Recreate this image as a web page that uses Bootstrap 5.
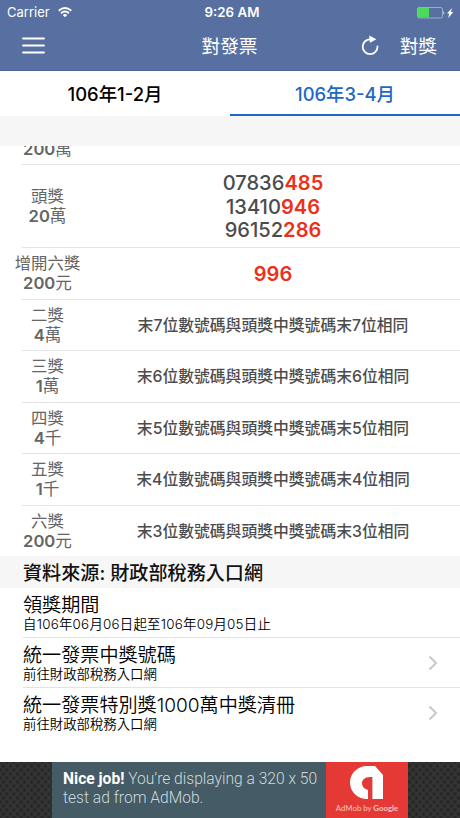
<!DOCTYPE html>
<html lang="zh-Hant">
<head>
<meta charset="utf-8">
<meta name="viewport" content="width=device-width, initial-scale=1">
<title>對發票</title>
<link href="https://cdn.jsdelivr.net/npm/bootstrap@5.3.0/dist/css/bootstrap.min.css" rel="stylesheet">
<style>
body{font-family:Inter,"Noto Sans CJK TC",sans-serif;height:818px;overflow:hidden;color:#111;background:#fff}
svg{display:block;flex:none}
.top-area{height:71px;background:#5770a1;border-bottom:1px solid #4b6494}
.status-line{height:24px;font-size:13px;padding:1px 3px 0 7px}
.status-line .clock{font-size:13.3px}
.status-line>div,.title-line>div{flex:1 1 0}
.title-line{height:46px;font-size:18.7px;padding:1px 23px 0 22px}
.period-tabs{height:45px}
.period-tabs .nav-link{border-radius:0;color:#000;font-size:18.4px;font-weight:500;padding:0;line-height:46px;height:45px}
.period-tabs .nav-link.active{background:#fff;color:#2168c4;border-bottom:2px solid #2168c4}
.band{background:#f6f6f6}
.prizes{height:410px;color:#4c4c4c}
.prize{margin-left:22px;border-bottom:1px solid #e3e3e3;height:51.5px;gap:13px;flex:none}
.prize:first-child{padding-bottom:5px}
.prize:last-child{border-bottom:0;height:50.5px}
.prize-name{width:51px;line-height:20px;font-size:16.4px;color:#656565;white-space:nowrap}
.prize-name b{font-weight:600;font-size:16.6px}
.prize-name i{font-style:normal;font-weight:400}
.rule{font-size:15.8px;font-weight:500;white-space:nowrap;padding-top:2px}
.digits{font-size:20.1px;line-height:23.7px;font-weight:500;padding-top:3px}
.hit{color:#ee2f19;font-weight:600}
.source{height:31.5px;font-size:19.1px;font-weight:500;padding:2px 0 0 23px;line-height:31px}
.info{margin-left:23px;height:50px;border-bottom:1px solid #e3e3e3;padding:5px 22px 0 0}
.info:last-child{border-color:transparent}
.info-title{font-size:19.1px;line-height:25px;color:#000;font-weight:350}
.info-sub{font-size:13.4px;line-height:13px;color:#000;font-weight:350}
.info-date{letter-spacing:.24px}
.chevron{margin-top:12px}
.ad{height:56px;background-color:#343434;background-image:radial-gradient(circle,#282828 1.6px,transparent 2.1px),radial-gradient(circle,#282828 1.6px,transparent 2.1px);background-size:7px 8px;background-position:0 0,3.5px 4px}
.ad-copy{width:274px;background:#455b65;color:#cddadf;font:300 15.6px/18.5px Roboto,sans-serif;padding:8px 0 0 11px;white-space:nowrap}
.ad-copy strong{color:#fff;font-weight:700}
.ad-brand{width:82px;background:#e53935;color:#fbc5c2;font:400 7.8px/9px Lato,sans-serif;padding-top:3px}
</style>
</head>
<body class="d-flex flex-column">
<header class="top-area text-white flex-shrink-0">
  <div class="status-line d-flex align-items-center">
    <div class="d-flex align-items-center gap-1"><span>Carrier</span>
      <svg class="ms-1" width="14" height="11" viewBox="0 0 14 11" fill="none" stroke="#fff" stroke-width="1.9"><path d="M.7 3.8Q7-1.6 13.3 3.8M3 6.3Q7 2.9 11 6.3"/><path d="M4.7 7.9Q7 6.2 9.3 7.9L7 10.3Z" fill="#fff" stroke="none"/></svg>
    </div>
    <span class="clock fw-semibold">9:26 AM</span>
    <div class="d-flex justify-content-end">
      <svg width="40" height="12" viewBox="0 0 40 12"><rect x=".5" y=".5" width="25" height="10.5" rx="1.5" fill="none" stroke="#9aabcb"/><path d="M1 1h11v9.5H1z" fill="#4cd95c"/><path d="M26.5 3.8q1.7 2 0 4z" fill="#fff"/><path d="M35 1l-5 5.5h2.2L31.3 11l5-6h-2.4z" fill="#fff"/></svg>
    </div>
  </div>
  <div class="title-line d-flex align-items-center">
    <div class="pb-1"><svg width="23" height="17" viewBox="0 0 23 17" stroke="#fff" stroke-width="1.8" stroke-linecap="round"><path d="M1 1.5h21M1 8.500h21M1 15.500h21"/></svg></div>
    <span>對發票</span>
    <div class="d-flex justify-content-end align-items-center">
      <svg class="mb-1" width="18" height="20" viewBox="0 0 18 20"><path d="M9.500 4.300A7.400 7.400 0 1 0 16.500 11.500" fill="none" stroke="#fff" stroke-width="1.800" stroke-linecap="round"/><path d="M8.200.4l7.200 3.900-6.500 3.500z" fill="#fff"/></svg>
      <span style="margin-left:21px">對獎</span>
    </div>
  </div>
</header>
<nav class="period-tabs nav nav-pills nav-fill flex-shrink-0">
  <a class="nav-link col-6 text-center" href="#">106年1-2月</a>
  <a class="nav-link active col-6 text-center" href="#">106年3-4月</a>
</nav>
<div class="band flex-shrink-0" style="height:30px"></div>
<section class="prizes d-flex flex-column justify-content-end overflow-hidden flex-shrink-0">
  <div class="prize d-flex align-items-end"><div class="prize-name text-center"><b>200<i>萬</i></b></div></div>
  <div class="prize d-flex align-items-center" style="height:83px"><div class="prize-name d-flex flex-column align-items-center"><span>頭獎</span><b>20<i>萬</i></b></div>
    <div class="digits flex-fill text-center"><div>07836<span class="hit">485</span></div><div>13410<span class="hit">946</span></div><div>96152<span class="hit">286</span></div></div></div>
  <div class="prize d-flex align-items-center"><div class="prize-name d-flex flex-column align-items-center"><span>增開六獎</span><b>200<i>元</i></b></div><div class="digits flex-fill text-center hit">996</div></div>
  <div class="prize d-flex align-items-center"><div class="prize-name d-flex flex-column align-items-center"><span>二獎</span><b>4<i>萬</i></b></div><div class="rule flex-fill text-center">末7位數號碼與頭獎中獎號碼末7位相同</div></div>
  <div class="prize d-flex align-items-center"><div class="prize-name d-flex flex-column align-items-center"><span>三獎</span><b>1<i>萬</i></b></div><div class="rule flex-fill text-center">末6位數號碼與頭獎中獎號碼末6位相同</div></div>
  <div class="prize d-flex align-items-center"><div class="prize-name d-flex flex-column align-items-center"><span>四獎</span><b>4<i>千</i></b></div><div class="rule flex-fill text-center">末5位數號碼與頭獎中獎號碼末5位相同</div></div>
  <div class="prize d-flex align-items-center"><div class="prize-name d-flex flex-column align-items-center"><span>五獎</span><b>1<i>千</i></b></div><div class="rule flex-fill text-center">末4位數號碼與頭獎中獎號碼末4位相同</div></div>
  <div class="prize d-flex align-items-center"><div class="prize-name d-flex flex-column align-items-center"><span>六獎</span><b>200<i>元</i></b></div><div class="rule flex-fill text-center">末3位數號碼與頭獎中獎號碼末3位相同</div></div>
</section>
<div class="band source flex-shrink-0">資料來源: 財政部稅務入口網</div>
<section class="flex-fill">
  <div class="info"><div class="info-title">領獎期間</div><div class="info-sub info-date">自106年06月06日起至106年09月05日止</div></div>
  <div class="info d-flex justify-content-between"><div><div class="info-title">統一發票中獎號碼</div><div class="info-sub">前往財政部稅務入口網</div></div>
    <svg class="chevron" width="10" height="16" viewBox="0 0 10 16" fill="none" stroke="#c6c6ca" stroke-width="1.9"><path d="M1.500 1.500L8 8l-6.500 6.500"/></svg></div>
  <div class="info d-flex justify-content-between"><div><div class="info-title">統一發票特別獎1000萬中獎清冊</div><div class="info-sub">前往財政部稅務入口網</div></div>
    <svg class="chevron" width="10" height="16" viewBox="0 0 10 16" fill="none" stroke="#c6c6ca" stroke-width="1.9"><path d="M1.500 1.500L8 8l-6.500 6.500"/></svg></div>
</section>
<footer class="ad d-flex justify-content-center flex-shrink-0">
  <div class="ad-copy"><strong>Nice job!</strong> You’re displaying a 320 x 50<br>test ad from AdMob.</div>
  <div class="ad-brand d-flex flex-column align-items-center">
    <svg width="34" height="35" viewBox="0 0 34 35"><path d="M17 1h8l8 9v24H23V12h-3c-5 0-8 3-8 6 0 4 3 6 6 7v9C8 34.500 0 27 0 17.500S8 1 17 1z" fill="#fff"/><path d="M23 12v22h-1V12z" fill="#d8b7b5"/></svg>
    <div class="mt-1 text-nowrap">AdMob by <b>Google</b></div>
  </div>
</footer>
<script src="https://cdn.jsdelivr.net/npm/bootstrap@5.3.0/dist/js/bootstrap.bundle.min.js"></script>
</body>
</html>
